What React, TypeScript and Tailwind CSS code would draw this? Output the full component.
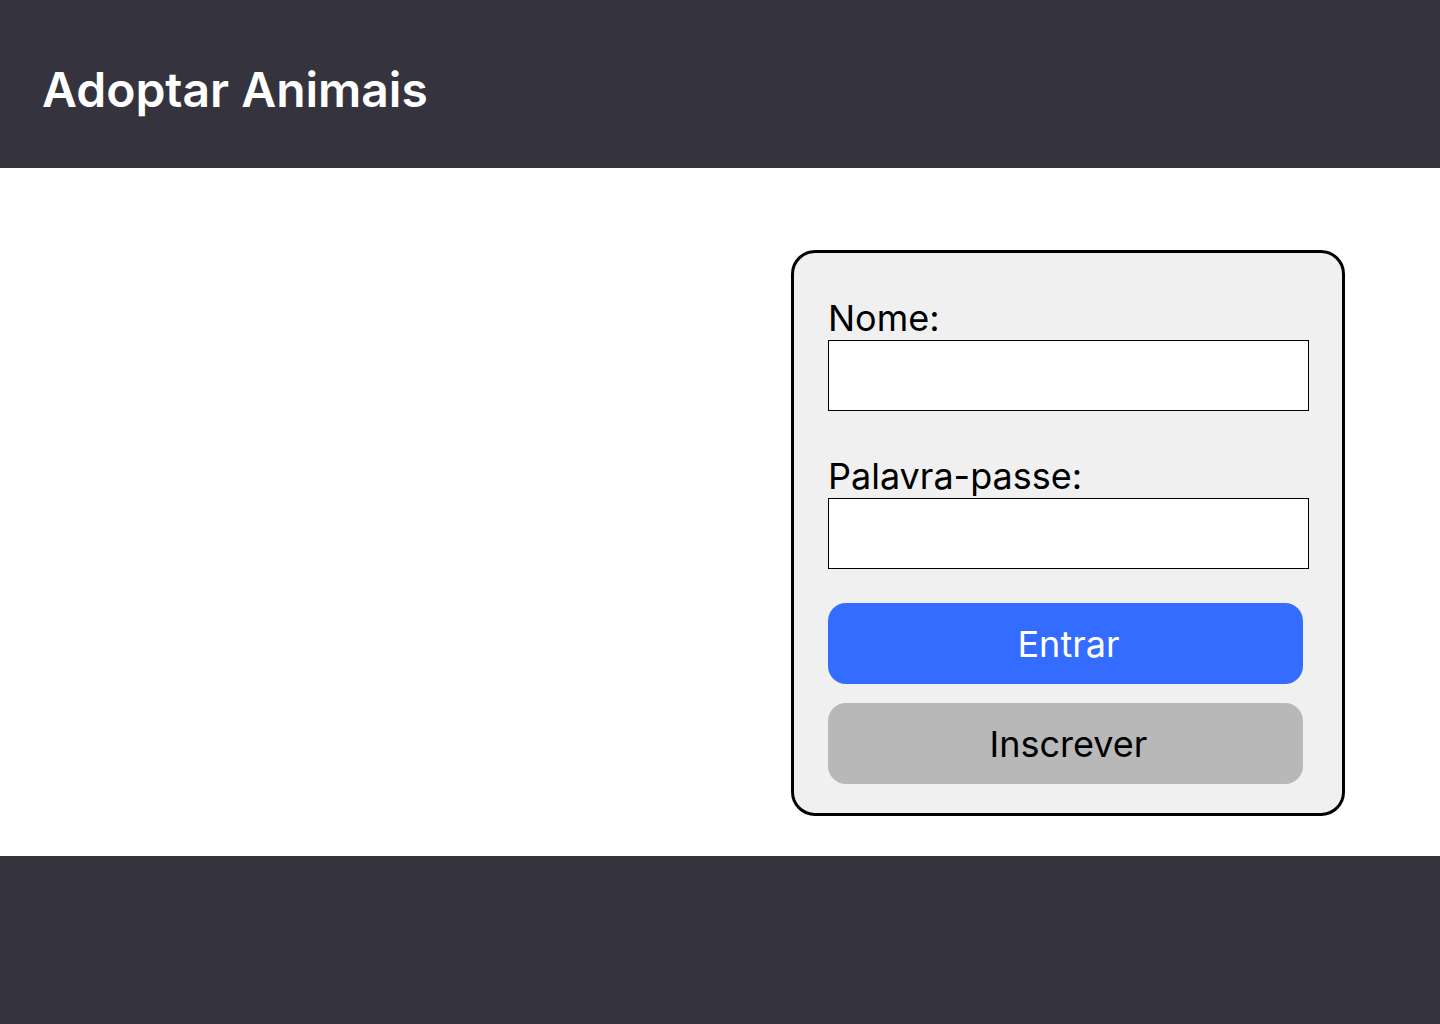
export default function App() {
  return (
    <div className="min-h-screen flex flex-col bg-white font-['Inter',sans-serif]">
      {/* Header */}
      <header className="h-[168px] bg-[#35343e] flex items-start pl-[42px] pt-[61px]">
        <h1 className="text-[48px] leading-[58px] font-semibold text-white">Adoptar Animais</h1>
      </header>

      {/* Main */}
      <main className="h-[688px] flex justify-end pr-[95px] pt-[82px]">
        <form
          className="w-[554px] h-[566px] bg-[#f0f0f0] border-[3px] border-black rounded-[24px] pl-[34px] pt-[43px] flex flex-col"
          onSubmit={(e) => e.preventDefault()}
        >
          <label className="flex flex-col">
            <span className="text-[36px] leading-[44px] text-black">Nome:</span>
            <input type="text" className="w-[481px] h-[71px] bg-white border border-black outline-none px-3 text-2xl" />
          </label>

          <label className="flex flex-col mt-[43px]">
            <span className="text-[36px] leading-[44px] text-black">Palavra-passe:</span>
            <input type="password" className="w-[481px] h-[71px] bg-white border border-black outline-none px-3 text-2xl" />
          </label>

          <button
            type="submit"
            className="mt-[34px] w-[475px] h-[81px] rounded-[18px] bg-[#336cff] text-white text-[36px] leading-none pl-[6px] cursor-pointer"
          >
            Entrar
          </button>
          <button
            type="button"
            className="mt-[19px] w-[475px] h-[81px] rounded-[18px] bg-[#b8b8b8] text-black text-[36px] leading-none pl-[6px] cursor-pointer"
          >
            Inscrever
          </button>
        </form>
      </main>

      {/* Footer */}
      <footer className="h-[168px] bg-[#35343e]" />
    </div>
  );
}
